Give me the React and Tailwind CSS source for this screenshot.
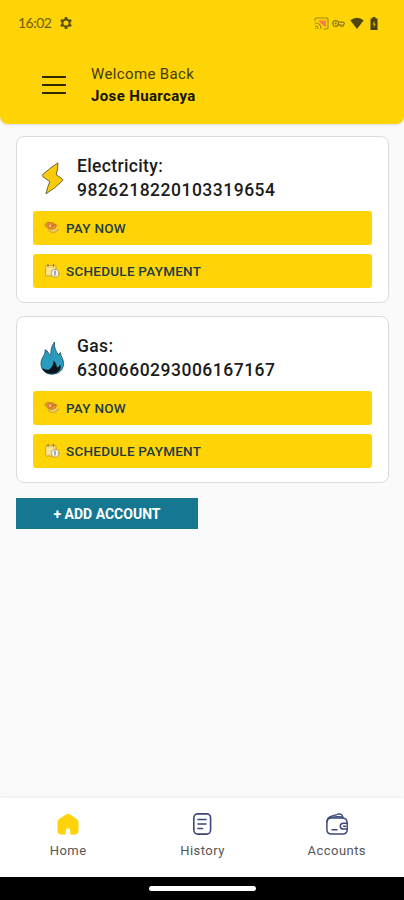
const accounts = [
  { id: 1, type: "Electricity", number: "9826218220103319654", icon: BoltIcon },
  { id: 2, type: "Gas", number: "6300660293006167167", icon: FlameIcon },
];

const tabs = [
  { label: "Home", icon: HomeIcon },
  { label: "History", icon: HistoryIcon },
  { label: "Accounts", icon: WalletIcon },
];

function BoltIcon() {
  return (
    <svg className="h-9 w-7" viewBox="0 0 28 36" fill="#fbcb09" stroke="#5f5630" strokeWidth="0.9" strokeLinejoin="round">
      <path d="M19 2.800 Q11 8 4.500 13.800 Q2.500 15.500 4 16.800 L10.800 21.500 Q8.500 27 7 33.800 Q16 28.500 23.500 20.800 Q24.300 19.800 23.200 18.800 L17.200 14.800 Q19 9 19 2.800 Z" />
    </svg>
  );
}

function FlameIcon() {
  return (
    <svg className="h-9 w-7" viewBox="0 0 28 36">
      <path
        d="M15.500 2 C12 7 12 10 11.800 15.500 C9.800 14.500 9 10.500 6 9.800 C7 15 2 17.500 2 23.500 C2 30 6.500 34.200 13 34.200 C19.500 34.200 24.500 30 24.500 23.500 C24.500 18.500 21.800 17 21.300 12.500 C20.300 13.500 20 14.200 19.800 15 C16.500 11.500 15 7.500 15.500 2 Z"
        fill="#2b9bbd"
        stroke="#205566"
        strokeWidth="0.9"
      />
      <path
        d="M14.500 20.500 C16.500 22.500 17.500 24 18 27.500 C19.800 27.500 20.500 25.500 21 24.500 C23.500 29 19 33.800 13 33.800 C8 33.800 4.500 31.500 3.200 28 C5.500 29.500 8 30.300 10.500 29.500 C12.500 27 14.800 25 14.500 20.500 Z"
        fill="#08131b"
      />
    </svg>
  );
}

function PayIcon() {
  return (
    <svg className="h-4 w-4" viewBox="0 0 16 16" fill="none" strokeLinecap="round">
      <path d="M1 4.500 L3.500 2.300 L9.500 3 L12.800 5.700 L10 9.500 L4.500 8.800 Z" fill="#ee8d24" stroke="#b47b29" strokeWidth="0.8" />
      <circle cx="6.300" cy="5.800" r="1.700" fill="#f5d8b5" stroke="#c65d24" strokeWidth="0.800" />
      <path d="M9.500 5.500 L12 4.500" stroke="#c75b22" strokeWidth="1" />
      <path d="M4.500 10.500 L8 12.500 L11.500 12 L14.500 9.300" stroke="#c7a650" strokeWidth="1.200" />
      <path d="M8.500 10.500 L12 9.700" stroke="#e7c7a0" strokeWidth="1.600" />
    </svg>
  );
}

function ScheduleIcon() {
  return (
    <svg className="h-4 w-4" viewBox="0 0 16 16" fill="none" strokeLinecap="round">
      <rect x="1.500" y="2.500" width="10.500" height="10.500" rx="1" fill="#f7dc80" stroke="#ba952d" strokeWidth="0.700" />
      <path d="M4 1.300 V3.300 M9.500 1.300 V3.300" stroke="#9e7a2c" strokeWidth="1.200" />
      <path d="M3.500 6.500 H9 M3.500 9.500 H7" stroke="#fff0b0" strokeWidth="1.300" />
      <circle cx="11" cy="10.200" r="3.900" fill="#f4f1e4" stroke="#a99257" strokeWidth="0.800" />
      <path d="M11 8.200 V12" stroke="#66839a" strokeWidth="1.200" />
    </svg>
  );
}

function HomeIcon() {
  return (
    <svg className="h-6 w-6" viewBox="0 0 24 24" fill="#ffd20a">
      <path d="M10.400 2.200 Q12 1.100 13.600 2.200 L20.800 7 Q22.500 8.200 22.500 10.200 V18.500 Q22.500 22.500 18.500 22.500 H14.200 V18.500 Q14.200 16.300 12 16.300 Q9.800 16.300 9.800 18.500 V22.500 H5.500 Q1.500 22.500 1.500 18.500 V10.200 Q1.500 8.200 3.200 7 Z" />
    </svg>
  );
}

function HistoryIcon() {
  return (
    <svg className="h-6 w-6" viewBox="0 0 24 24" fill="none" stroke="#3b4777" strokeWidth="1.600" strokeLinecap="round">
      <rect x="3.800" y="1.900" width="16.800" height="20.200" rx="4" />
      <path d="M8 7.500 H16 M8 12 H16 M8 16.500 H12.500" />
    </svg>
  );
}

function WalletIcon() {
  return (
    <svg className="h-6 w-6" viewBox="0 0 24 24" fill="none" stroke="#3f4b7b" strokeWidth="1.500" strokeLinecap="round" strokeLinejoin="round">
      <path d="M22.200 11.500 C22.200 7.800 20.500 6 17.500 6 H6.500 C3.500 6 1.900 8 1.900 11 V17.500 C1.900 20.500 3.500 22 6.500 22 H17.500 C20.500 22 22.200 20.500 22.200 17.500" />
      <path d="M2 10 C2 6.800 3.300 5.200 5.800 4.400 L13.500 2.100 C15.800 1.500 17.300 2.800 17.800 5 L18 6" />
      <path d="M3.800 6.300 C7 4.500 12 4.500 17.500 5" strokeWidth="1.300" />
      <path d="M22.200 11.300 H18.500 C16.500 11.300 15.300 12.500 15.300 14.200 C15.300 15.900 16.500 17.100 18.500 17.100 H22.200 Z" />
      <path d="M18.500 14.200 H20.500" strokeWidth="1.400" />
      <path d="M7 17.800 H12" />
    </svg>
  );
}

function StatusBar() {
  return (
    <div className="flex h-[46px] items-center justify-between pl-[18px] pr-[26px] text-[#6b5c0c]">
      <div className="flex items-center gap-2">
        <span className="font-[Lato] text-[14px] leading-none tracking-[-0.5px]">16:02</span>
        <svg className="h-3.5 w-3.5" viewBox="0 0 14 14" fill="none" stroke="#5a4e0b">
          <circle cx="7" cy="7" r="3.600" strokeWidth="2" />
          <path d="M7 1 V3 M7 11 V13 M1.800 4 L3.500 5 M10.500 9 L12.200 10 M1.800 10 L3.500 9 M10.500 5 L12.200 4" strokeWidth="2.600" />
        </svg>
      </div>
      <div className="flex items-center">
        <svg className="mr-[3px] h-[13px] w-[15px]" viewBox="0 0 15 13" fill="none" stroke="#a18914">
          <path d="M1 4 V2.500 Q1 1 2.500 1 H12.500 Q14 1 14 2.500 V10.500 Q14 12 12.500 12 H9.500" strokeWidth="1.100" />
          <path d="M4 3.500 H12 V9.500 H10 Z" fill="#fb7d4c" stroke="none" />
          <path d="M1 6 Q7 6 7 12 M1 9 Q4 9 4 12 M1 11.500 H2" strokeWidth="1.200" />
        </svg>
        <svg className="mr-[5px] h-[9px] w-[13px]" viewBox="0 0 14 9" fill="none" stroke="#8a7610" strokeWidth="1.200">
          <circle cx="3.900" cy="4.500" r="3.100" />
          <circle cx="3.900" cy="4.500" r="0.600" />
          <path d="M6.500 3 H11.500 Q13.300 3 13.300 4.500 Q13.300 5.500 12 6 V7.500 H9.500 V6 H6.500" />
        </svg>
        <svg className="mr-[6px] h-[12px] w-[14px]" viewBox="0 0 14 12" fill="#50460b">
          <path d="M7 12 L0.300 3.300 Q7 -2 13.700 3.300 Z" />
        </svg>
        <svg className="h-[13px] w-[8px]" viewBox="0 0 8 13">
          <path d="M2.500 0 H5.500 V1.500 H7.500 V13 H0.500 V1.500 H2.500 Z" fill="#4b410a" />
          <path d="M4.500 3.500 L2.300 7.500 H3.700 V11 L5.800 6.700 H4.500 Z" fill="#c5a50a" />
        </svg>
      </div>
    </div>
  );
}

function Header() {
  return (
    <header className="h-[124px] rounded-b-lg bg-[#fed406] shadow-[0_1px_3px_rgba(0,0,0,0.12)]">
      <StatusBar />
      <div className="flex items-center pl-[42px] pt-[17px]">
        <button className="flex w-6 flex-col gap-[6px]" aria-label="Menu">
          <span className="h-[2px] w-full bg-[#302803]" />
          <span className="h-[2px] w-full bg-[#302803]" />
          <span className="h-[2px] w-full bg-[#302803]" />
        </button>
        <div className="pl-[25px] text-[15px] leading-[22px] tracking-[0.36px]">
          <p className="text-[#443a05]">Welcome Back</p>
          <p className="font-bold text-[#171301]">Jose Huarcaya</p>
        </div>
      </div>
    </header>
  );
}

function ActionButton({ icon: Icon, children }) {
  return (
    <button className="flex h-[34px] w-full items-center gap-[6px] rounded-[3px] bg-[#fed406] pl-[11px] text-[13.5px] font-medium tracking-[0.25px] text-[#243b4b]">
      <Icon />
      <span>{children}</span>
    </button>
  );
}

function AccountCard({ account }) {
  const Icon = account.icon;
  return (
    <section className="h-[167px] rounded-lg border border-[#dcdcdc] bg-white px-4 pt-[17px]">
      <div className="flex h-12 items-center gap-[10px] pl-[6px]">
        <Icon />
        <div className="text-[17.5px] font-medium leading-6 text-[#1c1c1c]">
          <p className="tracking-[0.35px]">{account.type}:</p>
          <p className="tracking-[0.5px]">{account.number}</p>
        </div>
      </div>
      <div className="flex flex-col gap-[9px] pt-[9px]">
        <ActionButton icon={PayIcon}>PAY NOW</ActionButton>
        <ActionButton icon={ScheduleIcon}>SCHEDULE PAYMENT</ActionButton>
      </div>
    </section>
  );
}

function BottomNav() {
  return (
    <nav className="grid h-[79px] grid-cols-3 bg-white pl-[1px] pt-[14px] shadow-[0_-1px_3px_rgba(0,0,0,0.06)]">
      {tabs.map(({ label, icon: Icon }) => (
        <button key={label} className="flex flex-col items-center gap-[6px] text-[13px] leading-[18px] text-[#555]">
          <Icon />
          <span className="tracking-[0.45px]">{label}</span>
        </button>
      ))}
    </nav>
  );
}

function App() {
  return (
    <div className="flex h-[900px] w-full flex-col overflow-hidden bg-[#fafafa] font-[Roboto,sans-serif]">
      <Header />
      <main className="flex flex-1 flex-col gap-[13px] pl-4 pr-[15px] pt-3">
        {accounts.map((account) => (
          <AccountCard key={account.id} account={account} />
        ))}
        <button className="mt-[2px] h-[31px] w-[182px] bg-[#167792] pt-[2px] text-[14px] font-bold text-white">
          + ADD ACCOUNT
        </button>
      </main>
      <BottomNav />
      <div className="flex h-[23px] justify-center bg-black pt-[9px]">
        <div className="h-[5px] w-[107px] rounded-full bg-white" />
      </div>
    </div>
  );
}

export default App;
